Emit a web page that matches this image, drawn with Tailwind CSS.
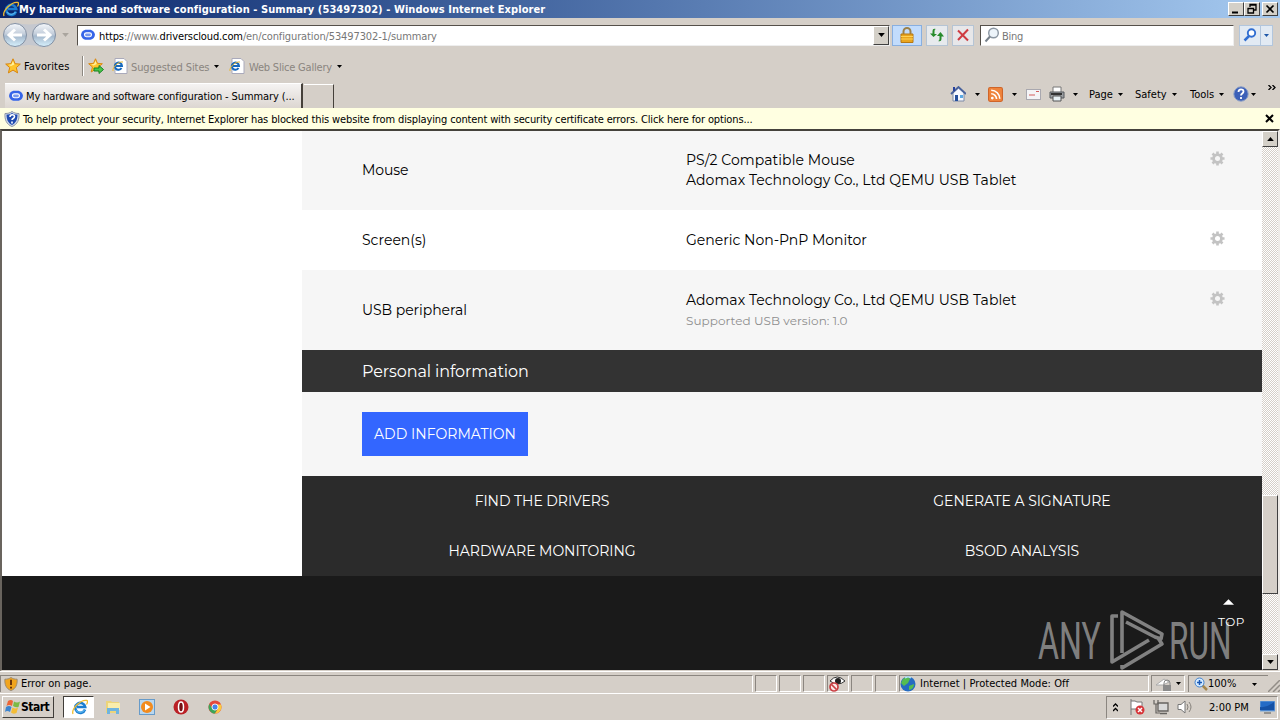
<!DOCTYPE html>
<html lang="en">
    <head>
        <meta charset="UTF-8" />
        <meta name="viewport" content="width=device-width, initial-scale=1.0" />
        <title>My hardware and software configuration - Summary</title>
        <script src="https://cdn.jsdelivr.net/npm/@tailwindcss/browser@4"></script>
    </head>
    <body class="w-[1280px] h-[720px] overflow-hidden flex flex-col bg-[#d5cfc8] text-black text-[11px] leading-[14px] whitespace-nowrap font-['DejaVu_Sans_Condensed','DejaVu_Sans',sans-serif] [font-stretch:condensed]">
        <!-- Shared icons -->
        <svg class="hidden">
            <symbol id="ie" viewBox="0 0 16 16">
                <path d="M13 10.500A5 5 0 1 1 13.200 8H5" fill="none" stroke="#1c7ed0" stroke-width="2.600" />
                <path d="M12.500 11A5 5 0 0 1 4 11" fill="none" stroke="#58b5ee" stroke-width="1.200" />
                <path d="M1 15C-1 10 9 0 15 1.500c1 .5.5 2.500-.5 4" fill="none" stroke="#f0bd31" stroke-width="1.300" />
            </symbol>
            <symbol id="cloud" viewBox="0 0 16 16">
                <path d="M5 2h6q4 1 5 5.500q-.5 5-5 6H5q-4-1-5-5.500q.5-5 5-6z" fill="#3564e8" />
                <rect x="4" y="5.500" width="8" height="4.500" rx="2.200" fill="#7898ee" stroke="#fff" stroke-width="1.300" />
            </symbol>
            <symbol id="star" viewBox="0 0 16 16">
                <path d="M8 .8l2.100 4.900 5.200.4-4 3.500 1.300 5.300L8 12.100l-4.600 2.800 1.300-5.300-4-3.500 5.200-.4z" fill="#ffc52e" stroke="#d8850f" />
                <path d="M8 3l1.300 3.500L6 8 3.500 6.800l3-.3z" fill="#fff2a0" />
            </symbol>
            <symbol id="page" viewBox="0 0 16 16">
                <path d="M3 .5h9l3 3v12H3z" fill="#fff" stroke="#aab" />
                <path d="M9.500 10A3.600 3.600 0 1 1 10 8H4" fill="none" stroke="#1769bd" stroke-width="2" />
                <path d="M1 13C0 9 7 3 11 4" fill="none" stroke="#e8b62c" />
            </symbol>
            <symbol id="down" viewBox="0 0 5 3"><path d="M0 0h5L2.500 3z" fill="currentColor" /></symbol>
            <symbol id="gear" viewBox="0 0 16 16">
                <circle cx="8" cy="8" r="4.200" fill="none" stroke="#c3c3c3" stroke-width="3" />
                <path d="M8 .5v3M8 12.500v3M.5 8h3M12.500 8h3M2.700 2.700l2.100 2.100M11.200 11.200l2.100 2.100M2.700 13.300l2.100-2.100M11.200 4.800l2.100-2.100" stroke="#c3c3c3" stroke-width="2.800" />
            </symbol>
            <symbol id="shield" viewBox="0 0 16 16">
                <path d="M8 .5C10 2 12 2.500 15 2.500c.5 6-1.500 11-7 13-5.500-2-7.500-7-7-13 3 0 5-.5 7-2z" fill="#d5deed" stroke="#8a93a5" />
                <path d="M8 2c2 1 3 1.500 5.500 1.500 0 5-1.500 8.500-5.500 10.500-4-2-5.500-5.500-5.500-10.500C5 3.500 6 3 8 2z" fill="#204bb0" />
                <path d="M6 6c0-3 4.500-3 4.500-.5 0 2-2.500 2-2.500 3.500M8 10.500v2" fill="none" stroke="#fff" stroke-width="1.600" />
            </symbol>
        </svg>

        <!-- Title bar -->
        <div class="h-[18px] shrink-0 flex items-center pl-[3px] pr-0.5 bg-linear-to-r from-[#0a246a] to-[#a6caf0]">
            <svg class="size-4"><use href="#ie" /></svg>
            <span class="grow pt-px text-white font-bold tracking-[0.07px]">My hardware and software configuration - Summary (53497302) - Windows Internet Explorer</span>
            <div class="flex h-3.5">
                <div class="w-4 bg-[#d4d0c8] border border-t-white border-l-white border-r-[#404040] border-b-[#404040]"><svg viewBox="0 0 14 12"><path d="M3 9.500h6" stroke="#000" stroke-width="2" /></svg></div>
                <div class="w-4 bg-[#d4d0c8] border border-t-white border-l-white border-r-[#404040] border-b-[#404040]"><svg viewBox="0 0 14 12"><path d="M5 4V1.500h6V7H9M5 2h6M3 5.500h5.500V10H3zM3 5.500h6" fill="none" stroke="#000" stroke-width="1.300" /></svg></div>
                <div class="w-4 ml-0.5 bg-[#d4d0c8] border border-t-white border-l-white border-r-[#404040] border-b-[#404040]"><svg viewBox="0 0 14 12"><path d="M3.500 2.500l7 7m0-7l-7 7" stroke="#000" stroke-width="1.700" /></svg></div>
            </div>
        </div>

        <!-- Address bar -->
        <div class="h-[34px] shrink-0 flex items-center pl-[2px]">
            <svg class="w-[55px] h-7 shrink-0" viewBox="0 0 55 28">
                <defs>
                    <linearGradient id="nav" x2="0" y2="1"><stop stop-color="#f5f8fc" /><stop offset=".45" stop-color="#c4cedb" /><stop offset=".55" stop-color="#a6b9cd" /><stop offset="1" stop-color="#d7f1fd" /></linearGradient>
                </defs>
                <path d="M13 1.500q14 4 28 0v25q-14-5-28 0z" fill="#c5c8cf" />
                <circle cx="13" cy="14" r="11.500" fill="url(#nav)" stroke="#8390a3" />
                <circle cx="42" cy="14" r="11.500" fill="url(#nav)" stroke="#8390a3" />
                <path d="M20 14H7m6-5.500L7 14l6 5.500M35 14h13m-6-5.500l6 5.500-6 5.500" fill="none" stroke="#fff" stroke-width="3" />
            </svg>
            <svg class="w-[7px] h-1 ml-[5px] mr-[8px] text-[#aaa59e]"><use href="#down" /></svg>
            <div class="w-[813px] h-[21px] shrink-0 flex items-center bg-white border border-t-[#55504a] border-l-[#55504a] border-r-[#eee] border-b-[#eee]">
                <svg class="size-3.5 mx-[3px] shrink-0"><use href="#cloud" /></svg>
                <span class="grow pl-px pt-[3px] text-[#777] tracking-[-0.12px]"><span class="text-black">https</span>://www.<span class="text-black">driverscloud.com</span>/en/configuration/53497302-1/summary</span>
                <div class="w-4 h-[19px] flex items-center justify-center bg-[#d4d0c8] border border-t-white border-l-white border-r-[#404040] border-b-[#404040]"><svg class="w-[7px] h-1"><use href="#down" /></svg></div>
            </div>
            <div class="w-[30px] h-[21px] ml-[2px] shrink-0 flex items-center justify-center bg-[#c2dcfc] border border-[#88afe0]">
                <svg class="w-4 h-4" viewBox="0 0 16 16"><path d="M4.500 8V4.500a3.500 3.500 0 0 1 7 0V8" fill="none" stroke="#9b814a" stroke-width="2" /><path d="M2 7h12v8.500H2z" fill="#e9a51e" stroke="#b57814" /><path d="M2 9.500h12M2 12h12" stroke="#ffd256" /></svg>
            </div>
            <div class="w-[22px] h-[21px] ml-[4px] shrink-0 flex items-center justify-center bg-[#e7eaed] border border-[#b5c4d4]">
                <svg class="size-4" viewBox="0 0 16 16"><path d="M7 2Q5.500 2 5.500 4v3H8L4.500 10 1 6.500h2.500V4Q3.500 1 7 2zM9 14q1.500 0 1.500-2V9H8l3.500-4L15 9.500h-2.500V12Q12.500 15 9 14z" fill="#278b2c" /></svg>
            </div>
            <div class="w-[22px] h-[21px] ml-[4px] shrink-0 flex items-center justify-center bg-[#e7e7e9] border border-[#b5c4d4]">
                <svg class="size-4" viewBox="0 0 16 16"><path d="M3 3.500l10 10M13 2.500L3 13" stroke="#cf3c42" stroke-width="2" /></svg>
            </div>
            <div class="w-[254px] h-[21px] ml-[6px] shrink-0 flex items-center bg-white border border-t-[#55504a] border-l-[#55504a] border-r-[#eee] border-b-[#eee] text-[#777]">
                <svg class="size-4 ml-[3px] mr-[2px]" viewBox="0 0 16 16"><circle cx="9.500" cy="6" r="4.800" fill="#edf4fa" stroke="#8b96a2" stroke-width="1.400" /><path d="M6 9.500L1.500 14.500" stroke="#77818b" stroke-width="2" /></svg>
                <span class="pt-[3px] tracking-[-0.3px]">Bing</span>
            </div>
            <div class="w-[34px] h-[21px] ml-[5px] shrink-0 flex items-center bg-[#e2eaf3] border border-[#b2c6dd]">
                <svg class="size-5" viewBox="0 0 20 20"><circle cx="11.500" cy="8" r="3.700" fill="#fff" stroke="#316ed1" stroke-width="1.900" /><path d="M9 11l-4.500 4.500" stroke="#316ed1" stroke-width="2.500" /></svg>
                <div class="h-full w-3 border-l border-[#b2c6dd] flex items-center justify-center text-[#1e57a8]"><svg class="w-[5px] h-[3px]"><use href="#down" /></svg></div>
            </div>
        </div>

        <!-- Favorites bar -->
        <div class="h-7 shrink-0 flex items-center pl-[5px]">
            <svg class="size-4 shrink-0"><use href="#star" /></svg>
            <span class="w-[61px] pl-[3px] pt-0.5 tracking-[0.1px]">Favorites</span>
            <div class="w-0.5 h-5 border-l border-[#8c8780] bg-white mr-1"></div>
            <svg class="size-4 shrink-0" viewBox="0 0 16 16"><use href="#star" width="15" height="15" /><path d="M6 10h5V7.500l4.500 4-4.500 4V13H6z" fill="#49c64a" stroke="#178425" /></svg>
            <svg class="size-4 ml-2 shrink-0"><use href="#page" /></svg>
            <span class="w-[86px] shrink-0 pl-[3px] pt-[3px] text-[#8a857f] tracking-[-0.1px]">Suggested Sites</span>
            <svg class="w-[5px] h-[3px] shrink-0"><use href="#down" /></svg>
            <svg class="size-4 ml-[10px] shrink-0"><use href="#page" /></svg>
            <span class="w-[92px] shrink-0 pl-[4px] pt-[3px] text-[#8a857f] tracking-[-0.2px]">Web Slice Gallery</span>
            <svg class="w-[5px] h-[3px] shrink-0"><use href="#down" /></svg>
        </div>

        <!-- Tabs and command bar -->
        <div class="h-7 shrink-0 flex pl-[5px]">
            <div class="w-[298px] shrink-0 mt-[3px] flex items-center pl-1 bg-linear-to-b from-[#f5f3f2] to-[#dcd6d1] border-t border-white border-r-2 border-r-[#45403a]">
                <svg class="size-3.5 mr-[3px] shrink-0"><use href="#cloud" /></svg>
                <span class="pt-0.5 tracking-[-0.11px]">My hardware and software configuration - Summary (...</span>
            </div>
            <div class="w-[30px] shrink-0 mt-1 ml-px border-t border-white border-r border-r-[#45403a]"></div>
            <div class="grow"></div>
            <div class="w-[330px] shrink-0 flex items-center">
                <svg class="w-4 h-4" viewBox="0 0 16 16"><path d="M3 7v8h11V7L8.500 2z" fill="#f5f8ff" stroke="#7d8aa5" /><path d="M1 8l7.500-7L16 8" fill="none" stroke="#48629c" stroke-width="1.800" /><path d="M3 1h2v4H3z" fill="#27419c" /><path d="M5 9h3v6H5z" fill="#254f9b" /><path d="M10 9h3v3h-3z" fill="#5ca9e3" /></svg>
                <svg class="w-[5px] h-[3px] ml-[9px] mr-[7px]"><use href="#down" /></svg>
                <svg class="w-[15px] h-[15px] ml-px" viewBox="0 0 14 14"><rect x=".5" y=".5" width="13" height="13" rx="1.500" fill="#ef843c" stroke="#cf6529" /><circle cx="4" cy="10.300" r="1.300" fill="#fff" /><path d="M3 6.300a5 5 0 0 1 5 5M3 3a8 8 0 0 1 8 8" fill="none" stroke="#fff" stroke-width="1.500" /></svg>
                <svg class="w-[5px] h-[3px] ml-[9px] mr-[9px]"><use href="#down" /></svg>
                <svg class="w-[15px] h-[11px]" viewBox="0 0 15 11"><rect x=".5" y=".5" width="14" height="10" fill="#f5f4f6" stroke="#a9a8af" /><path d="M10 2.500h3M3 6h6" stroke="#d35d5d" /></svg>
                <svg class="size-4 ml-[8px]" viewBox="0 0 16 16"><path d="M4 1h8v6H4z" fill="#fff" stroke="#777" /><path d="M1 6h14v6H1z" fill="#9b9ea2" stroke="#55585d" /><path d="M4 10h8v5H4z" fill="#e7f0f4" stroke="#555" /><path d="M2 8h11" stroke="#333" stroke-width="2" /></svg>
                <svg class="w-[5px] h-[3px] ml-[8px] mr-[11px]"><use href="#down" /></svg>
                <span class="w-[29px] pt-0.5">Page</span><svg class="w-[5px] h-[3px]"><use href="#down" /></svg>
                <span class="w-[37px] ml-[12px] pt-0.5">Safety</span><svg class="w-[5px] h-[3px]"><use href="#down" /></svg>
                <span class="w-[29px] ml-[13px] pt-0.5">Tools</span><svg class="w-[5px] h-[3px]"><use href="#down" /></svg>
                <svg class="size-4 ml-[9px]" viewBox="0 0 16 16"><circle cx="8" cy="8" r="7.200" fill="#3c60b8" stroke="#8b9fc7" /><path d="M5.500 6c0-3.500 5-3.500 5-.5 0 2-2.500 2-2.500 4M8 11v2" fill="none" stroke="#fff" stroke-width="1.800" /></svg>
                <svg class="w-[5px] h-[3px] ml-[2px]"><use href="#down" /></svg>
                <svg class="w-[8px] h-[5px] ml-[12px] mb-[13px]" viewBox="0 0 8 5"><path d="M.5 0L3 2.500.5 5M4.500 0L7 2.500 4.500 5" fill="none" stroke="#000" stroke-width="1.300" /></svg>
            </div>
        </div>

        <!-- Information bar -->
        <div class="h-[21px] shrink-0 flex items-center px-1 bg-[#ffffe1]">
            <svg class="size-4 mr-[3px]"><use href="#shield" /></svg>
            <span class="grow pt-0.5 tracking-[-0.13px]">To help protect your security, Internet Explorer has blocked this website from displaying content with security certificate errors. Click here for options...</span>
            <svg class="size-[9px] mr-[2px]" viewBox="0 0 9 9"><path d="M1 1l7 7M8 1L1 8" stroke="#000" stroke-width="2" /></svg>
        </div>

        <!-- Browser viewport -->
        <div class="h-[542px] shrink-0 flex border-t-2 border-t-[#45423c] border-l-2 border-l-[#69645e] border-b border-b-[#d5cfc8] border-r-2 border-r-[#eeebe7]">
            <div class="w-[1260px] flex flex-col bg-white text-[14px] leading-5 font-['Montserrat','Inter',sans-serif] [font-stretch:normal]">
                <div class="w-[960px] ml-[300px]">
                    <div class="h-[79px] pb-px flex items-center bg-[#f6f6f6]">
                        <span class="w-[324px] ml-[60px] tracking-[-0.1px]">Mouse</span>
                        <span class="w-[524px] tracking-[0.06px]">PS/2 Compatible Mouse<br />Adomax Technology Co., Ltd QEMU USB Tablet</span>
                        <svg class="size-[15px] mb-[23px]"><use href="#gear" /></svg>
                    </div>
                    <div class="h-[60px] flex items-center">
                        <span class="w-[324px] ml-[60px]">Screen(s)</span>
                        <span class="w-[524px]">Generic Non-PnP Monitor</span>
                        <svg class="size-[15px] mb-[3px]"><use href="#gear" /></svg>
                    </div>
                    <div class="h-20 flex items-center bg-[#f6f6f6]">
                        <span class="w-[324px] ml-[60px] tracking-[-0.05px]">USB peripheral</span>
                        <span class="w-[524px] tracking-[0.06px]">Adomax Technology Co., Ltd QEMU USB Tablet<br /><span class="block text-[12px] text-[#8e8e8e] pt-px -mb-px">Supported USB version: 1.0</span></span>
                        <svg class="size-[15px] mb-[23px]"><use href="#gear" /></svg>
                    </div>
                    <div class="h-[42px] flex items-center pl-[60px] pt-0.5 bg-[#333] text-white text-[16px]"><span class="tracking-[-0.1px]">Personal information</span></div>
                    <div class="h-[84px] flex items-center pl-[60px] bg-[#f6f6f6]">
                        <button class="w-[166px] h-11 bg-[#3366ff] text-white tracking-[0.05px]">ADD INFORMATION</button>
                    </div>
                    <div class="h-[100px] grid grid-cols-2 grid-rows-2 items-center text-center bg-[#2b2b2b] text-white tracking-[-0.05px]">
                        <span>FIND THE DRIVERS</span>
                        <span>GENERATE A SIGNATURE</span>
                        <span>HARDWARE MONITORING</span>
                        <span>BSOD ANALYSIS</span>
                    </div>
                </div>
                <div class="relative grow bg-[#1a1a1a] text-white">
                    <!-- Watermark -->
                    <div class="absolute left-[1036px] top-[33px] w-[194px] h-[64px] text-white/45">
                        <div class="absolute left-0 top-[9px] w-[130px] origin-left scale-x-[0.63] text-[51px] leading-[48px] font-normal font-['Roboto',sans-serif]">ANY</div>
                        <svg class="absolute left-[70px] -top-px w-[58px] h-[62px]" viewBox="0 0 58 62" fill="none" stroke="currentColor" stroke-width="3.600" stroke-linejoin="round">
                            <path d="M10 8H4v46l37-22M14 45V4l40 22-1 5-6-2L18 14M14 57v3l40-24-4-6" />
                        </svg>
                        <div class="absolute left-[131px] top-[9px] w-[130px] origin-left scale-x-[0.62] text-[51px] leading-[48px] font-normal font-['Roboto',sans-serif]">RUN</div>
                    </div>
                    <!-- Back to top link -->
                    <div class="absolute left-[1215px] top-[22px] flex flex-col items-center text-[12px]">
                        <svg class="w-[11px] h-1.5 mt-px mb-2 mr-[5px]" viewBox="0 0 12 6"><path d="M0 6l6-6 6 6z" fill="#fff" /></svg>
                        <span class="pl-px leading-[18px] tracking-[0.4px]">TOP</span>
                    </div>
                </div>
            </div>
            <!-- Scrollbar -->
            <div class="w-4 flex flex-col bg-[repeating-conic-gradient(#fff_0_25%,#d5cfc8_0_50%)] bg-[length:2px_2px]">
                <div class="h-4 flex items-center justify-center bg-[#d4d0c8] border border-t-white border-l-white border-r-[#404040] border-b-[#404040]"><svg class="w-[7px] h-1 rotate-180"><use href="#down" /></svg></div>
                <div class="h-[348px]"></div>
                <div class="h-[99px] bg-[#d5cfc8] border border-t-white border-l-white border-r-[#404040] border-b-[#404040]"></div>
                <div class="grow"></div>
                <div class="h-4 flex items-center justify-center bg-[#d4d0c8] border border-t-white border-l-white border-r-[#404040] border-b-[#404040]"><svg class="w-[7px] h-1"><use href="#down" /></svg></div>
            </div>
        </div>

        <!-- Status bar -->
        <div class="h-[23px] shrink-0 flex pt-[3px] pb-px border-t border-b border-white">
            <div class="w-[753px] flex items-center pl-[3px] border-l border-t border-r border-[#8b8680] border-r-white">
                <svg class="w-3.5 h-4 mr-[3px]" viewBox="0 0 16 16"><path d="M8 .5C10 2 12 2.500 15 2.500c.5 6-1.500 11-7 13-5.500-2-7.500-7-7-13 3 0 5-.5 7-2z" fill="#f1a51e" stroke="#948570" /><path d="M8 3v6M8 11v2" stroke="#5b270a" stroke-width="2" /></svg>
                Error on page.
            </div>
            <div class="w-[22px] ml-0.5 border border-[#8b8680] border-r-white border-b-white"></div>
            <div class="w-[22px] ml-0.5 border border-[#8b8680] border-r-white border-b-white"></div>
            <div class="w-[22px] ml-0.5 border border-[#8b8680] border-r-white border-b-white"></div>
            <div class="w-[22px] ml-0.5 flex items-center border border-[#8b8680] border-r-white border-b-white">
                <svg class="w-[18px] h-4 shrink-0" viewBox="0 0 18 16"><path d="M2 5q7-8 15 0-7 6-15 0z" fill="#fff" stroke="#333" /><circle cx="10" cy="5" r="3" fill="#222" /><circle cx="6" cy="11" r="4" fill="#fbe7e5" stroke="#ca4145" stroke-width="1.700" /><path d="M3.500 8.500l5 5" stroke="#ca4145" stroke-width="1.700" /></svg>
            </div>
            <div class="w-[22px] ml-0.5 border border-[#8b8680] border-r-white border-b-white"></div>
            <div class="w-[22px] ml-0.5 border border-[#8b8680] border-r-white border-b-white"></div>
            <div class="w-[250px] ml-0.5 flex items-center border border-[#8b8680] border-r-white border-b-white">
                <svg class="size-4 mr-1" viewBox="0 0 16 16"><circle cx="8" cy="8" r="7.500" fill="#256bc1" /><path d="M3 3q5-4 7 0l-2 4-4 3-3-3zM9 10l5-2q0 5-5 6z" fill="#55bd50" /><path d="M5 2q3-2 6 0" stroke="#b6ebf6" stroke-width="1.500" /></svg>
                <span class="tracking-[0.05px]">Internet | Protected Mode: Off</span>
            </div>
            <div class="w-[34px] ml-[2px] flex items-center pl-1 border border-[#8b8680] border-r-white border-b-white">
                <svg class="w-4 h-4 mr-[4px] shrink-0" viewBox="0 0 16 16"><path d="M0 9l8-6 5 3-6 3z" fill="#fff" stroke="#aaa" /><path d="M8 9V7a3 3 0 0 1 6 0v2" fill="none" stroke="#888" /><path d="M7 9h8v6H7z" fill="#8b8b8b" /></svg>
                <svg class="w-[5px] h-[3px] shrink-0"><use href="#down" /></svg>
            </div>
            <div class="w-[80px] ml-[3px] flex items-center pl-[5px] border-l border-t border-[#8b8680]">
                <svg class="w-3.5 h-3.5" viewBox="0 0 14 14"><path d="M8 8l5 5" stroke="#a6874e" stroke-width="2.500" /><circle cx="5.500" cy="5.500" r="4.500" fill="#d4eaff" stroke="#4483cd" /><path d="M5.500 3v5M3 5.500h5" stroke="#1857b5" stroke-width="1.500" /></svg>
                <span class="w-[44px]">100%</span><svg class="w-[5px] h-[3px]"><use href="#down" /></svg>
            </div>
            <svg class="w-3 h-3 mt-[5px]" viewBox="0 0 12 12"><path d="M0 12L12 0M5 12l7-7M10 12l2-2" stroke="#928d87" stroke-width="1.500" /></svg>
        </div>

        <!-- Taskbar -->
        <div class="grow flex items-center pl-0.5 pr-0.5">
            <button class="w-[52px] h-[22px] flex items-center pl-0.5 bg-[#d5cfc8] border border-t-white border-l-white border-r-[#403d39] border-b-[#403d39] font-bold text-[12px] tracking-[-0.5px]">
                <svg class="size-4 shrink-0" viewBox="0 0 16 16"><path d="M3 2q3-2 5 0L7 7Q4 5 1.500 7z" fill="#ed6637" /><path d="M9 2.500q3 2 6 0L13.500 8Q11 9 8 7z" fill="#7cba46" /><path d="M1 8q3-2 5.500 0L5 13q-3-2-5 0z" fill="#3c84cf" /><path d="M7.500 8.500q3 2 5.500 0L11.500 14Q8 15.500 6 13.500z" fill="#f4bd36" /></svg>Start
            </button>
            <div class="w-[31px] h-[22px] ml-[9px] flex items-center justify-center bg-white border border-t-[#403d39] border-l-[#403d39] border-r-white border-b-white"><svg class="size-4 ml-0.5"><use href="#ie" /></svg></div>
            <svg class="size-4 ml-[11px]" viewBox="0 0 16 16"><path d="M1 2h5l1 1h7v11H1z" fill="#ecd47a" /><path d="M3 4h12v7H3z" fill="#f9edac" /><path d="M2 9h12v6h-3v-3H5v3H2z" fill="#6fb4df" /></svg>
            <svg class="size-4 ml-[18px]" viewBox="0 0 16 16"><rect x=".5" y=".5" width="15" height="15" fill="#b9d7ef" stroke="#679bc9" /><circle cx="8" cy="8" r="6" fill="#f28b1e" /><path d="M6 4.500v7L11.500 8z" fill="#fff" /></svg>
            <svg class="size-4 ml-[18px]" viewBox="0 0 16 16"><circle cx="8" cy="8" r="7.500" fill="#ba2025" /><ellipse cx="8" cy="8" rx="2.500" ry="5" fill="#741014" stroke="#fff" stroke-width="1.500" /></svg>
            <svg class="size-3.5 ml-[19px]" viewBox="0 0 16 16"><circle cx="8" cy="8" r="7.500" fill="#e4483d" /><path d="M1.500 4.500A7.500 7.500 0 0 0 8 15.500l3-6-6 0z" fill="#3ba659" /><path d="M8 15.500A7.500 7.500 0 0 0 14.800 5H8l3.500 5z" fill="#fccb3e" /><circle cx="8" cy="8" r="3.500" fill="#4584ec" stroke="#fff" /></svg>
            <div class="grow"></div>
            <div class="w-[172px] h-[23px] flex items-center pl-[6px] border border-[#8b8680] border-r-white border-b-white">
                <svg class="w-[5px] h-[9px]" viewBox="0 0 5 9"><path d="M0 3.500L2.500 1 5 3.500M0 8l2.500-2.500L5 8" fill="none" stroke="#000" stroke-width="1.300" /></svg>
                <svg class="size-4 ml-[11px]" viewBox="0 0 16 16"><path d="M2 0v16M2 2h4l2 1h5v7H2" fill="#fff" stroke="#777" /><circle cx="11" cy="11" r="4.500" fill="#d73438" /><path d="M9 9l4 4M13 9l-4 4" stroke="#fff" stroke-width="1.500" /></svg>
                <svg class="size-4 ml-[8px]" viewBox="0 0 16 16"><path d="M5 4h10v8H5zM7 14.500h7" fill="#d9d9d9" stroke="#66635f" stroke-width="1.300" /><path d="M1 1v4h4V1M3 5v9h4" fill="none" stroke="#66635f" stroke-width="1.200" /></svg>
                <svg class="size-4 ml-[8px]" viewBox="0 0 16 16"><path d="M1 5.500h3L8 2v12l-4-3.500H1z" fill="#fff" stroke="#777" /><path d="M10 5q2 3 0 6M12 3q4 5 0 10" fill="none" stroke="#85817b" /></svg>
                <span class="w-[51px] ml-4 pt-0.5">2:00 PM</span>
                <svg class="w-[15px] h-[13px]" viewBox="0 0 15 13"><path d="M0 0h15v10H0z" fill="#246bc6" stroke="#78a7d8" /><path d="M0 6q7 1 14-5v8H0z" fill="#1551a5" /><path d="M4 12h7" stroke="#555" /></svg>
            </div>
        </div>
    </body>
</html>
